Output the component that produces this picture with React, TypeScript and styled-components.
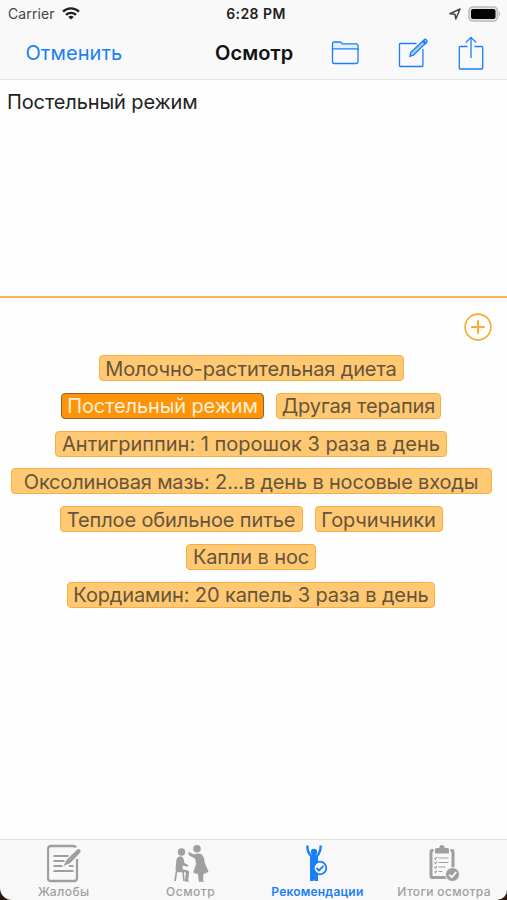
import React from 'react';
import styled, { createGlobalStyle } from 'styled-components';

const GlobalStyle = createGlobalStyle`
  * { box-sizing: border-box; }
  body { margin: 0; background: #fefefe; }
`;

const BLUE = '#1a7ff8';
const GRAY = '#9f9f9f';

const Screen = styled.main`
  width: 507px;
  height: 900px;
  display: flex;
  flex-direction: column;
  overflow: hidden;
  background: #2a1a12;
  color: #222;
  font-family: Inter, 'Liberation Sans', sans-serif;
`;

const TopBar = styled.header`
  height: 80px;
  flex: none;
  background: #f9f9f9;
  border-bottom: 1px solid #e4e4e4;
`;

const StatusBar = styled.div`
  height: 27px;
  display: grid;
  grid-template-columns: 1fr auto 1fr;
  align-items: center;
  padding: 0 6px 0 8px;
  font-size: 14px;
`;

const Carrier = styled.div`
  display: flex;
  align-items: center;
  gap: 7px;
  color: #444;
  letter-spacing: 0.1px;
  svg { display: block; }
`;

const Clock = styled.div`
  font-size: 14px;
  font-weight: 600;
  letter-spacing: 0.45px;
  color: #222;
  margin-left: 3px;
`;

const StatusIcons = styled.div`
  display: flex;
  justify-content: flex-end;
  align-items: center;
  gap: 7px;
  svg { display: block; }
`;

const NavBar = styled.nav`
  height: 52px;
  display: flex;
  align-items: center;
  padding-left: 25.5px;
  svg { display: block; }
`;

const CancelButton = styled.button`
  width: 189.5px;
  padding: 0;
  border: 0;
  background: none;
  text-align: left;
  font: 400 20px/24px Inter, sans-serif;
  letter-spacing: 0.05px;
  color: ${BLUE};
`;

const Title = styled.h1`
  width: 115.5px;
  margin: 0;
  font-size: 20px;
  line-height: 24px;
  font-weight: 600;
  letter-spacing: 0.1px;
  white-space: nowrap;
  color: #111;
`;

const NavIcons = styled.div`
  display: flex;
  align-items: center;
`;

const Note = styled.section`
  height: 218px;
  flex: none;
  padding: 9px 7px;
  background: #fefefe;
  border-bottom: 2px solid #fbb65c;
  font-size: 20px;
  line-height: 26px;
  letter-spacing: -0.12px;
`;

const Suggestions = styled.section`
  flex: 1;
  display: flex;
  flex-direction: column;
  background: #fefefe;
`;

const AddRow = styled.div`
  display: flex;
  justify-content: flex-end;
  padding: 15px 15px 14px 0;
  svg { display: block; }
`;

const Chips = styled.div`
  display: flex;
  flex-direction: column;
  gap: 11.8px;
  padding-right: 5px;
`;

const ChipRow = styled.div`
  display: flex;
  justify-content: center;
  gap: 12px;
`;

const Chip = styled.button<{ $w: number; $track?: number; $active?: boolean }>`
  width: ${p => p.$w}px;
  height: 26px;
  display: flex;
  align-items: center;
  justify-content: center;
  padding: 1px 0 0;
  border: 1.5px solid ${p => (p.$active ? '#8b6430' : '#fbae40')};
  border-radius: 4px;
  background: ${p => (p.$active ? '#ff9408' : '#ffc973')};
  color: ${p => (p.$active ? '#fff0d8' : '#66543a')};
  font: 400 20px/24px Inter, sans-serif;
  letter-spacing: ${p => p.$track ?? -0.12}px;
  white-space: nowrap;
`;

const TabBar = styled.nav`
  height: 61px;
  flex: none;
  display: grid;
  grid-template-columns: repeat(4, 1fr);
  background: #f8f8f8;
  border-top: 1px solid #e2e2e2;
  border-radius: 0 0 10px 12px;
`;

const Tab = styled.button<{ $active?: boolean; $track?: number }>`
  display: flex;
  flex-direction: column;
  align-items: center;
  padding: 4px 0 0 1px;
  border: 0;
  background: none;
  color: ${p => (p.$active ? BLUE : GRAY)};
  font: ${p => (p.$active ? 600 : 500)} 12px/16px Inter, sans-serif;
  letter-spacing: ${p => p.$track ?? 0.5}px;
  white-space: nowrap;
  svg { display: block; }
`;

const rows: { text: string; w: number; active?: boolean; track?: number }[][] = [
  [{ text: 'Молочно-растительная диета', w: 305 }],
  [{ text: 'Постельный режим', w: 203, active: true }, { text: 'Другая терапия', w: 165 }],
  [{ text: 'Антигриппин: 1 порошок 3 раза в день', w: 392, track: 0 }],
  [{ text: 'Оксолиновая мазь: 2...в день в носовые входы', w: 481, track: -0.18 }],
  [{ text: 'Теплое обильное питье', w: 243 }, { text: 'Горчичники', w: 128 }],
  [{ text: 'Капли в нос', w: 130 }],
  [{ text: 'Кордиамин: 20 капель 3 раза в день', w: 368, track: -0.13 }],
];

const WifiIcon = () => (
  <svg width="18" height="13" viewBox="0 0 18 13" fill="none" stroke="#222" strokeWidth="2.3">
    <path d="M1 4.6a11.5 11.5 0 0 1 16 0" />
    <path d="M4 7.8a7.2 7.2 0 0 1 10 0" />
    <path d="M9 12.6 6.2 9.9a4.2 4.2 0 0 1 5.6 0Z" fill="#222" stroke="none" />
  </svg>
);

const LocationIcon = () => (
  <svg width="12" height="12" viewBox="0 0 12 12" fill="none" stroke="#444" strokeWidth="1.5" strokeLinejoin="round">
    <path d="M1 5.8 11 1 6.8 11 6 6.3Z" />
  </svg>
);

const BatteryIcon = () => (
  <svg width="33" height="16" viewBox="0 0 33 16">
    <rect x="1" y="1" width="28.5" height="14" rx="4" fill="#e6e6e6" stroke="#bbb" strokeWidth="1.6" />
    <rect x="3" y="3" width="24.5" height="10" rx="2" fill="#050505" />
    <path d="M31 5.3q2 2.7 0 5.4Z" fill="#aaa" />
  </svg>
);

const FolderIcon = () => (
  <svg width="28" height="24" viewBox="0 0 28 24" fill="none" stroke={BLUE} strokeWidth="1.3">
    <path d="M1.500 9V2.8Q1.500 1 3.300 1h5.4q1.2 0 2 1.2l.5.6h14q1.800 0 1.800 1.800V9Z" fill="#e2effd" />
    <path d="M1.500 7.800H27v13q0 1.700-1.700 1.700H3.200q-1.700 0-1.700-1.700Z" fill="#f9f9f9" />
  </svg>
);

const ComposeIcon = () => (
  <svg width="30" height="30" viewBox="0 0 30 30" fill="none" stroke={BLUE} strokeWidth="1.3">
    <path d="M18.500 5.500H2.200q-.7 0-.7.7v21.600q0 .7.7.7h22q.7 0 .7-.7V11" />
    <path d="m11.800 18.300 1-4L26.200 1.700q1-.9 2 .1l.5.600q.9 1-.1 2L15.400 17.200Z" fill="#9bcafb" />
    <path d="m25 2.800 3 3" strokeWidth="2.400" />
  </svg>
);

const ShareIcon = () => (
  <svg width="26" height="34" viewBox="0 0 26 34" fill="none" stroke={BLUE} strokeWidth="1.3">
    <path d="M9.500 10.500H2.200q-.9 0-.9.900v20.700q0 .9.9.9h21.600q.9 0 .9-.9V11.400q0-.9-.9-.9h-7.300" />
    <path d="M13 22V1.500M7.800 6.600 13 1.400l5.200 5.200" />
  </svg>
);

const PlusIcon = () => (
  <svg width="28" height="28" viewBox="0 0 28 28" fill="none" stroke="#fba92f">
    <circle cx="14" cy="14" r="12.900" strokeWidth="1.600" />
    <path d="M14 7.200v13.600M7.200 14h13.600" strokeWidth="2" />
  </svg>
);

const ComplaintsIcon = () => (
  <svg width="34" height="40" viewBox="1 0 34 40" fill="none" stroke={GRAY} strokeWidth="2">
    <path d="M30 3.500Q29.400 2 27 2H5Q2 2 2 5v29q0 3 3 3h23q3 0 3-3V15" strokeWidth="2.300" />
    <path d="M7.500 12h15M7.500 17h11M7.500 22h9M7.500 27h20M23 22h4.500" strokeWidth="1.900" />
    <path d="m17.500 22 3-6L31 5.700q1.500-1.300 3 0 1.300 1.400.1 3L24 19.200Z" fill={GRAY} stroke="none" />
  </svg>
);

const ExamIcon = () => (
  <svg width="36" height="40" viewBox="1 0 36 40" fill={GRAY}>
    <circle cx="9.500" cy="8" r="3.700" />
    <path d="M6.300 13q3.200-1.800 5 1l1.300 5.200 3.800 1.800-.8 1.800-5-1.200v3.600l5.400 1.300q1.500.4 1.200 2l-1 7q0 1.800 1.700 2h-5l1-9-9-1.400Q3 26.800 3.600 24L4.400 16q.2-2 1.900-3Z" />
    <path d="M3 37l1.500-9.500H11L12 37" fill="none" stroke={GRAY} strokeWidth="1.700" />
    <circle cx="25" cy="4.800" r="3.800" />
    <path d="M16.500 7.800l5.300 2.800q5-2.400 8.200.2 2 1.800 3 8.700l3.500 8q-2.700 2.500-5 2.300l-.5 6q.2 1.500 1.500 2h-5.500l-1.200-8q-3.200 0-4.500-1.500l2.700-8.300-.7-5.200-6-3.200-1-2Z" />
  </svg>
);

const AdviceIcon = () => (
  <svg width="24" height="40" viewBox="0 0 24 40" fill={BLUE}>
    <path d="M2.300 1.500q0 7 4 10.800h5.400q4-3.800 4-10.800" fill="none" stroke={BLUE} strokeWidth="2.400" />
    <circle cx="9" cy="8" r="3.200" />
    <path d="M5 12h8v25H9.500L9 35l-.5 2H5Z" />
    <circle cx="15" cy="24" r="6.300" fill="#f8f8f8" stroke={BLUE} strokeWidth="1.800" />
    <path d="m11.500 24 2.500 2.400 4.500-4.500" fill="none" stroke={BLUE} strokeWidth="2" />
  </svg>
);

const SummaryIcon = () => (
  <svg width="32" height="40" viewBox="0 0 32 40" fill="none" stroke={GRAY}>
    <path d="M5.500 6.500h-1Q3 6.500 3 8v24q0 1.500 1.500 1.500h19q1.500 0 1.500-1.500V8q0-1.500-1.500-1.500h-1" strokeWidth="3" />
    <path d="M7 9.500V5.500Q7 4 8.500 4h2.700q.5-3 2.800-3t2.800 3h2.700Q21 4 21 5.500v4Z" fill={GRAY} stroke="none" />
    <path d="m6.500 14 1 1 1.500-2M10.500 14h10M6.500 18.500l1 1 1.500-2M10.500 18.500h10M6.500 23l1 1 1.500-2M10.500 23h7M6.500 27.500l1 1 1.500-2M10.500 27.500h4" strokeWidth="1.200" />
    <circle cx="24.500" cy="30.500" r="7" fill={GRAY} stroke="#f8f8f8" strokeWidth="1" />
    <path d="m21 30.500 2.700 2.700 4.600-5" stroke="#f8f8f8" strokeWidth="1.700" />
  </svg>
);

const FolderSlot = styled.span`margin-right: 39px;`;
const ComposeSlot = styled.span`margin-right: 30px;`;

export default function App() {
  return (
    <>
      <GlobalStyle />
      <Screen>
        <TopBar>
          <StatusBar>
            <Carrier>Carrier <WifiIcon /></Carrier>
            <Clock>6:28 PM</Clock>
            <StatusIcons><LocationIcon /><BatteryIcon /></StatusIcons>
          </StatusBar>
          <NavBar>
            <CancelButton>Отменить</CancelButton>
            <Title>Осмотр</Title>
            <NavIcons>
              <FolderSlot><FolderIcon /></FolderSlot>
              <ComposeSlot><ComposeIcon /></ComposeSlot>
              <ShareIcon />
            </NavIcons>
          </NavBar>
        </TopBar>
        <Note>Постельный режим</Note>
        <Suggestions>
          <AddRow><PlusIcon /></AddRow>
          <Chips>
            {rows.map((row, i) => (
              <ChipRow key={i}>
                {row.map(c => (
                  <Chip key={c.text} $w={c.w} $active={c.active} $track={c.track}>{c.text}</Chip>
                ))}
              </ChipRow>
            ))}
          </Chips>
        </Suggestions>
        <TabBar>
          <Tab><ComplaintsIcon />Жалобы</Tab>
          <Tab><ExamIcon />Осмотр</Tab>
          <Tab $active $track={0.2}><AdviceIcon />Рекомендации</Tab>
          <Tab $track={0.35}><SummaryIcon />Итоги осмотра</Tab>
        </TabBar>
      </Screen>
    </>
  );
}
